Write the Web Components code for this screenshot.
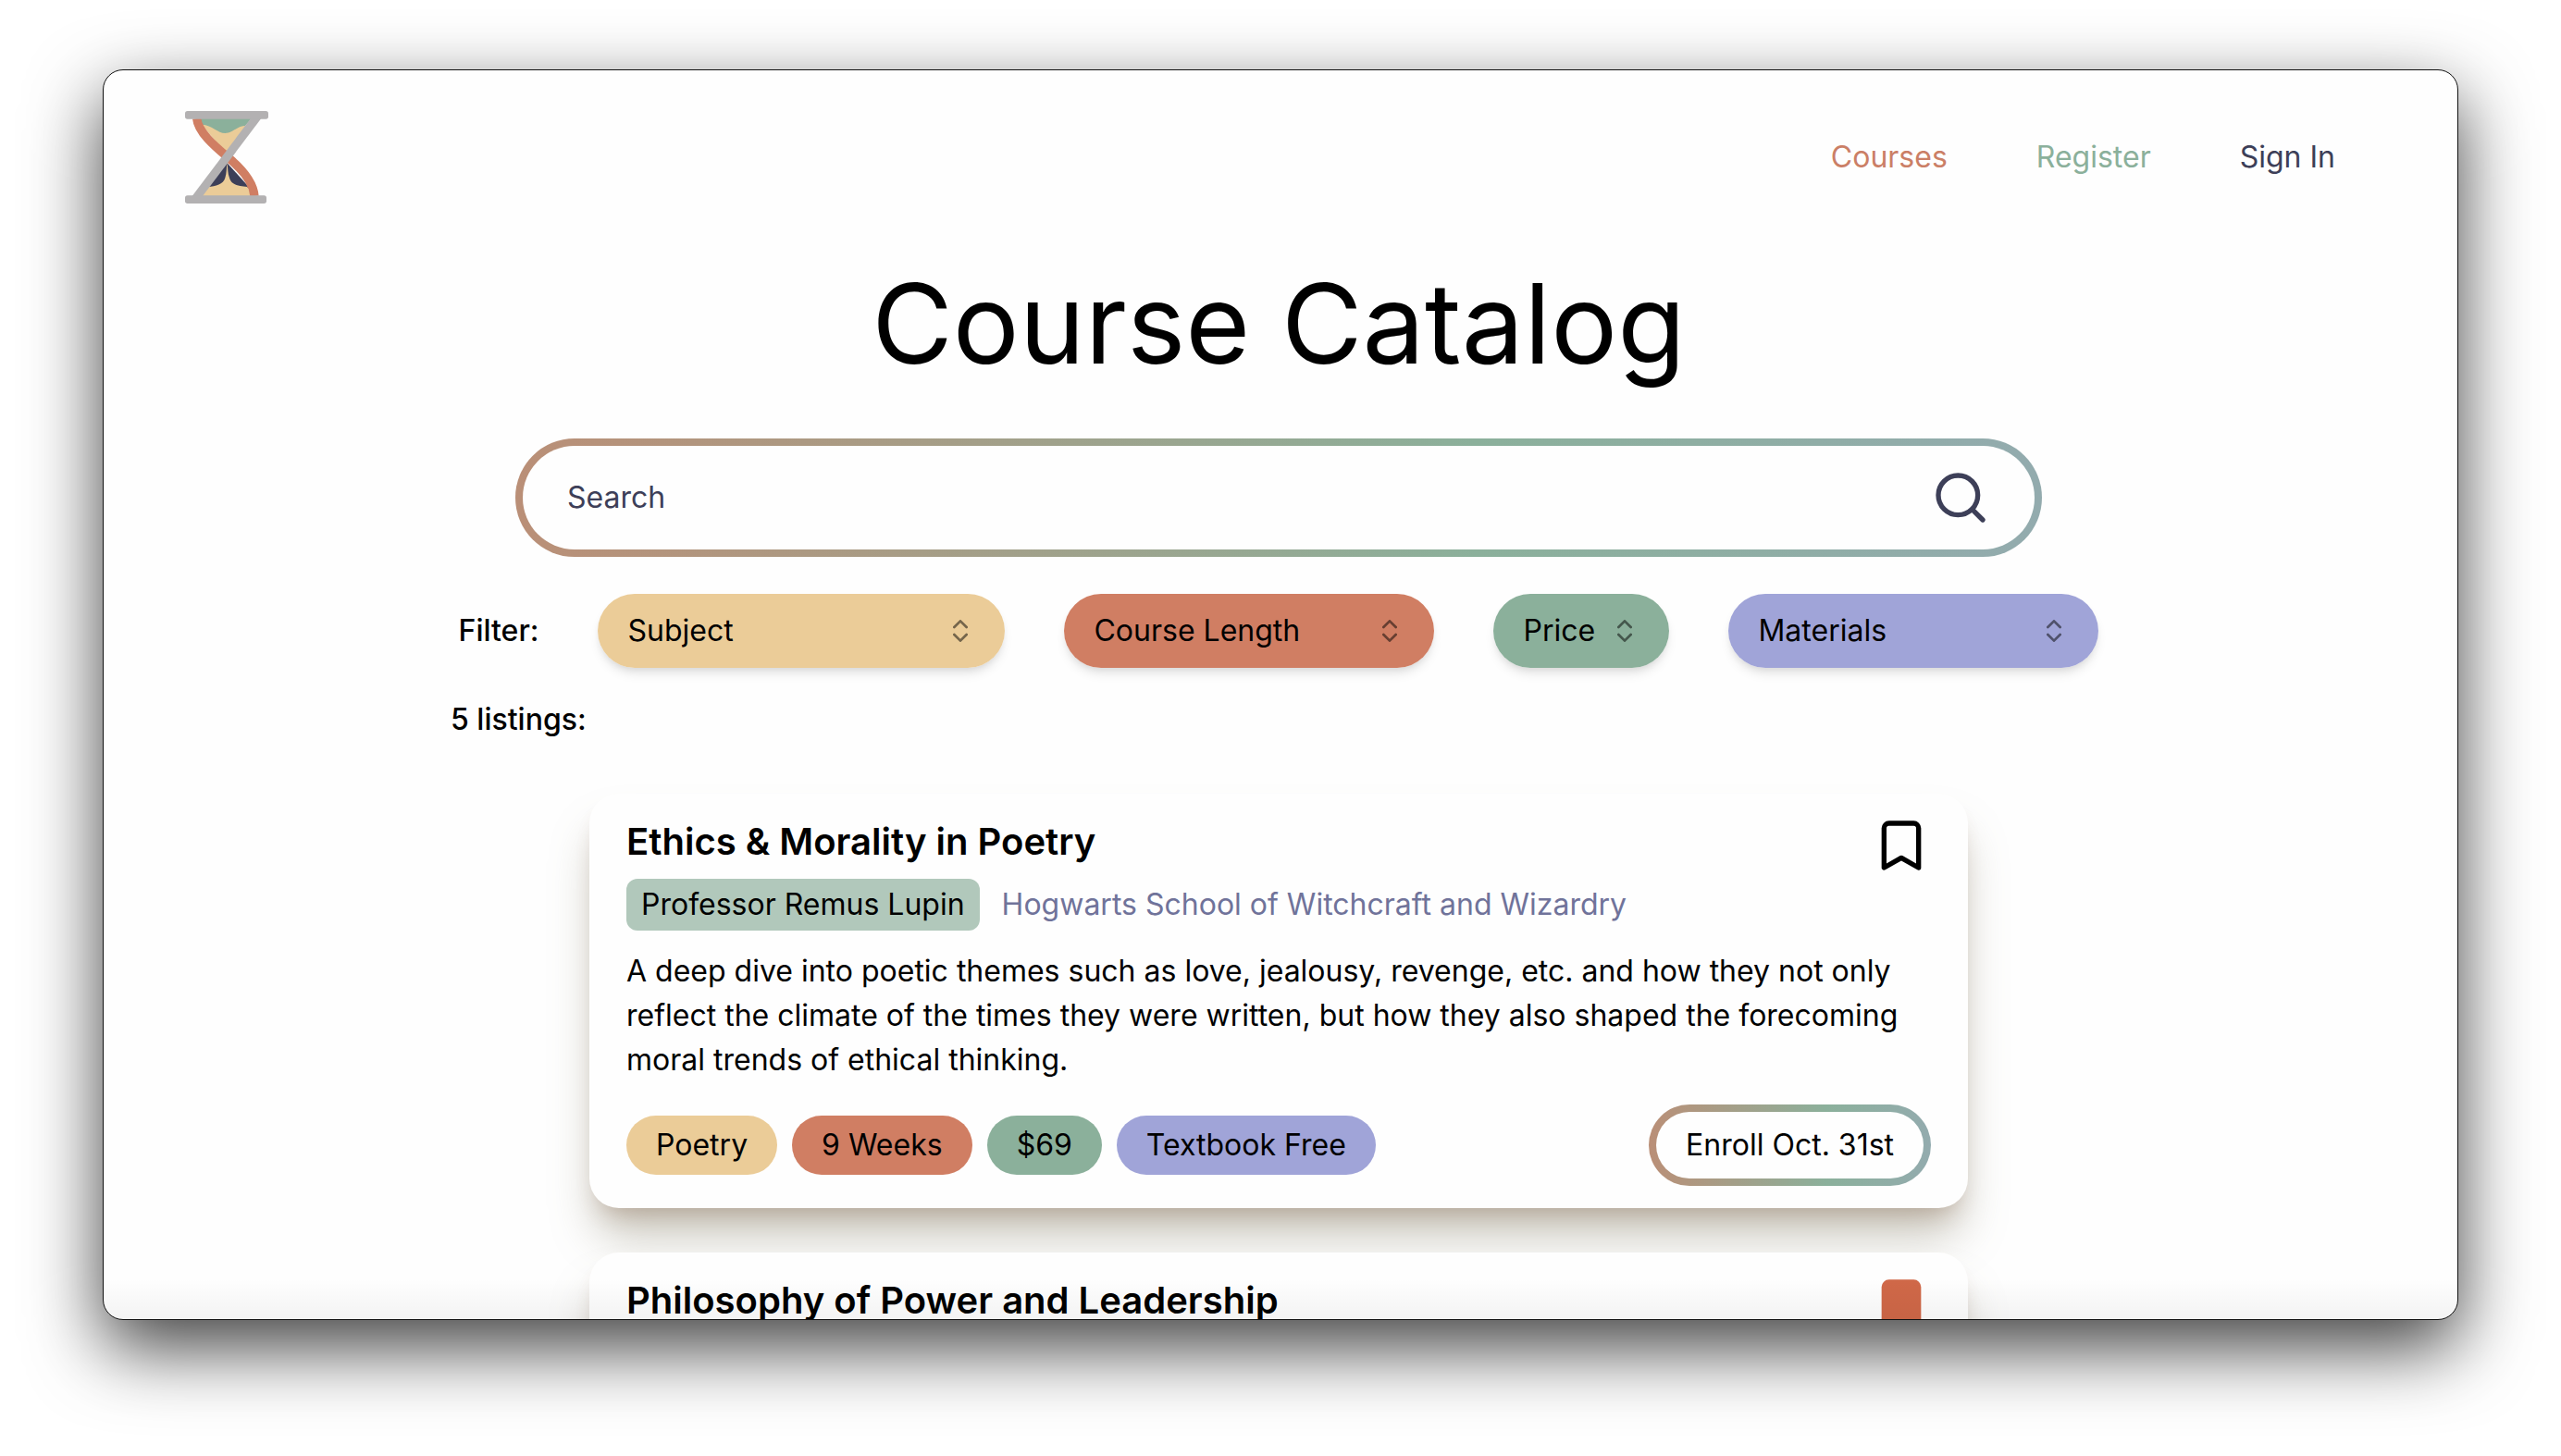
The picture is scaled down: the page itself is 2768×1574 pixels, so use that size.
<!DOCTYPE html>
<html lang="en">
<head>
<meta charset="utf-8">
<title>Course Catalog</title>
<style>
  :root {
    --sand: #ebcc98;
    --clay: #d07e63;
    --sage: #8bb09b;
    --iris: #a0a4d8;
    --navy: #3d3f58;
    --page: #fefefe;
    --ring: linear-gradient(to right, #ba8f77, #8bb09b 63%, #93abae);
  }
  body {
    margin: 0;
    min-height: 100vh;
    box-sizing: border-box;
    padding: 75px 111px 0;
    background: #fff;
    overflow: hidden;
    font: 400 32px/48px Inter, "Liberation Sans", sans-serif;
    color: #000;
  }
</style>
</head>
<body>
<app-window>
  <site-header></site-header>
  <catalog-title>Course Catalog</catalog-title>
  <search-bar></search-bar>
  <filter-row>
    <filter-select label="Subject" tone="sand" size="wide"></filter-select>
    <filter-select label="Course Length" tone="clay" size="medium"></filter-select>
    <filter-select label="Price" tone="sage"></filter-select>
    <filter-select label="Materials" tone="iris" size="medium"></filter-select>
  </filter-row>
  <listing-group count="5">
    <course-card>
      <span slot="title">Ethics &amp; Morality in Poetry</span>
      <course-byline slot="byline">
        <span slot="professor">Professor Remus Lupin</span>
        <span slot="school">Hogwarts School of Witchcraft and Wizardry</span>
      </course-byline>
      <span slot="summary">A deep dive into poetic themes such as love, jealousy, revenge, etc. and how they not only reflect the climate of the times they were written, but how they also shaped the forecoming moral trends of ethical thinking.</span>
      <course-tag slot="tags" tone="sand">Poetry</course-tag>
      <course-tag slot="tags" tone="clay">9 Weeks</course-tag>
      <course-tag slot="tags" tone="sage">$69</course-tag>
      <course-tag slot="tags" tone="iris">Textbook Free</course-tag>
      <enroll-button slot="action">Enroll Oct. 31st</enroll-button>
    </course-card>
    <course-card saved>
      <span slot="title">Philosophy of Power and Leadership</span>
    </course-card>
  </listing-group>
</app-window>

<script>
const define = (name, html, setup) => {
  const template = document.createElement('template');
  template.innerHTML = html;
  customElements.define(name, class extends HTMLElement {
    constructor() {
      super();
      this.attachShadow({ mode: 'open' }).append(template.content.cloneNode(true));
    }
    connectedCallback() { if (setup) setup(this, this.shadowRoot); }
  });
};

define('app-window', `
<style>
  :host {
    display: grid;
    box-sizing: border-box;
    height: calc(100vh - 222px);
    border: 1px solid #111;
    border-radius: 22px;
    background: var(--page);
    box-shadow: 0 30px 80px rgba(0, 0, 0, .75);
    overflow: hidden;
  }
  .page, .fade { grid-area: 1 / 1; min-height: 0; }
  .page { display: flex; flex-direction: column; align-items: center; padding-right: 4px; overflow: hidden; }
  .fade {
    align-self: end;
    height: 44px;
    z-index: 1;
    pointer-events: none;
    background: linear-gradient(transparent, rgba(0, 0, 0, .045));
  }
</style>
<div class="page"><slot></slot></div>
<div class="fade"></div>`);

define('site-header', `
<style>
  :host { display: block; align-self: stretch; flex: none; }
  header {
    display: flex; align-items: center; justify-content: space-between;
    padding: 44px 128px 70px 88px;
  }
  nav { display: flex; gap: 96px; }
  a { color: var(--navy); text-decoration: none; }
  a.courses { color: #cb7f66; }
  a.register { color: var(--sage); }
  svg { display: block; }
</style>
<header>
  <a href="#home" aria-label="Home">
    <svg width="90" height="100" viewBox="60 60 270 300" aria-hidden="true">
      <path d="M105 84H276L252 112L190 140L116 110Z" fill="#8bb09b"/>
      <path d="M114 104C150 106 165 132 190 132C215 132 230 107 258 107L195 200Z" fill="#ebcc98"/>
      <path d="M196 228L270 310L130 312Z" fill="#3d3f58"/>
      <path d="M196 232C194 246 195 262 190 277C184 299 160 304 134 307L112 336H276L262 306C225 302 210 298 204 277C198 262 199 246 197 232Z" fill="#ebcc98"/>
      <path d="M98 84C102 128 156 174 195 207C236 240 281 286 285 336" fill="none" stroke="#d07e63" stroke-width="28"/>
      <path d="M273 84H307L117 336H83Z" fill="#b3b1b2"/>
      <rect x="60" y="60" width="270" height="26" rx="8" fill="#b3b1b2"/>
      <rect x="60" y="334" width="264" height="26" rx="8" fill="#b3b1b2"/>
    </svg>
  </a>
  <nav>
    <a class="courses" href="#courses">Courses</a>
    <a class="register" href="#register">Register</a>
    <a href="#sign-in">Sign In</a>
  </nav>
</header>`);

define('catalog-title', `
<style>
  :host { display: block; flex: none; }
  h1 { margin: 0 0 64px; font-size: 120px; line-height: 120px; font-weight: 400; }
</style>
<h1><slot></slot></h1>`);

define('search-bar', `
<style>
  :host { display: block; flex: none; width: 65%; max-width: 1650px; }
  form {
    display: flex; align-items: center; box-sizing: border-box; height: 128px; padding: 0 48px;
    border: 8px solid transparent; border-radius: 64px;
    background: linear-gradient(var(--page), var(--page)) padding-box, var(--ring) border-box;
  }
  input {
    flex: 1; min-width: 0; padding: 0; border: 0; outline: 0; background: none;
    font: inherit; color: var(--navy);
  }
  input::placeholder { color: var(--navy); opacity: 1; }
  button { padding: 0; border: 0; background: none; color: var(--navy); }
  svg { display: block; }
</style>
<form role="search">
  <input type="text" placeholder="Search" aria-label="Search">
  <button type="button" aria-label="Search courses">
    <svg width="64" height="64" viewBox="0 0 24 24" fill="none" stroke="currentColor" stroke-width="2" stroke-linecap="round" stroke-linejoin="round"><circle cx="11" cy="11" r="8"/><path d="m21 21-4.3-4.3"/></svg>
  </button>
</form>`);

define('filter-row', `
<style>
  :host { display: flex; flex: none; align-items: center; gap: 64px; margin-top: 40px; }
  .label { font-weight: 500; }
</style>
<span class="label">Filter:</span>
<slot></slot>`);

define('filter-select', `
<style>
  :host { display: grid; align-items: center; height: 80px; border-radius: 40px;
    box-shadow: 0 8px 12px -2px rgba(0, 0, 0, .1), 0 4px 8px -4px rgba(0, 0, 0, .1); }
  :host([size="wide"]) { width: 440px; }
  :host([size="medium"]) { width: 400px; }
  select {
    grid-area: 1 / 1; width: 100%; height: 80px; margin: 0; padding: 0 80px 0 32px;
    appearance: none; border: 0; border-radius: 40px; background: var(--tone);
    font: inherit; color: #000;
  }
  svg { grid-area: 1 / 1; justify-self: end; margin-right: 32px; opacity: .5; pointer-events: none; }
</style>
<select><option></option></select>
<svg width="32" height="32" viewBox="0 0 24 24" fill="none" stroke="#000" stroke-width="2" stroke-linecap="round" stroke-linejoin="round" aria-hidden="true"><path d="m7 15 5 5 5-5M7 9l5-5 5 5"/></svg>`,
(host, root) => {
  const label = host.getAttribute('label');
  host.style.setProperty('--tone', `var(--${host.getAttribute('tone')})`);
  root.querySelector('select').setAttribute('aria-label', label);
  root.querySelector('option').textContent = label;
});

define('listing-group', `
<style>
  :host { display: flex; flex: none; flex-direction: column; align-items: center; gap: 48px;
    width: 100%; max-width: 1790px; margin-top: 32px; }
  p { align-self: stretch; margin: 0 0 8px; font-weight: 500; }
</style>
<p></p>
<slot></slot>`,
(host, root) => { root.querySelector('p').textContent = host.getAttribute('count') + ' listings:'; });

define('course-card', `
<style>
  :host { display: block; width: 100%; max-width: 1490px; }
  article {
    padding: 24px 40px; border-radius: 32px; background: var(--page);
    box-shadow: 0 36px 50px -8px rgba(115, 108, 80, .4), 0 16px 24px -12px rgba(140, 85, 60, .32);
  }
  .head { display: flex; align-items: flex-start; justify-content: space-between; height: 68px; }
  h2 { margin: 0; font-size: 40px; line-height: 56px; font-weight: 600; }
  button { padding: 0; border: 0; background: none; color: #000; }
  :host([saved]) button { color: #d06848; }
  :host([saved]) path { fill: currentColor; }
  svg { display: block; }
  p { margin: 20px 0 24px; }
  .foot { display: flex; align-items: center; justify-content: space-between; min-height: 88px; }
  .tags { display: flex; gap: 16px; }
</style>
<article>
  <div class="head">
    <h2><slot name="title"></slot></h2>
    <button type="button" aria-label="Save course">
      <svg width="64" height="64" viewBox="0 0 24 24" fill="none" stroke="currentColor" stroke-width="2" stroke-linecap="round" stroke-linejoin="round"><path d="m19 21-7-4-7 4V5a2 2 0 0 1 2-2h10a2 2 0 0 1 2 2v16z"/></svg>
    </button>
  </div>
  <slot name="byline"></slot>
  <p><slot name="summary"></slot></p>
  <div class="foot">
    <div class="tags"><slot name="tags"></slot></div>
    <slot name="action"></slot>
  </div>
</article>`);

define('course-byline', `
<style>
  :host { display: flex; align-items: center; gap: 24px; }
  .professor { padding: 4px 16px; border-radius: 12px; background: #b1c8bb; }
  .school { color: #70739a; }
</style>
<span class="professor"><slot name="professor"></slot></span>
<span class="school"><slot name="school"></slot></span>`);

define('course-tag', `
<style>
  :host { display: block; padding: 8px 32px; border-radius: 32px; background: var(--tone); }
</style>
<slot></slot>`,
host => host.style.setProperty('--tone', `var(--${host.getAttribute('tone')})`));

define('enroll-button', `
<style>
  :host { display: block; }
  button {
    display: block; height: 88px; padding: 0 32px;
    border: 8px solid transparent; border-radius: 44px;
    background: linear-gradient(var(--page), var(--page)) padding-box, var(--ring) border-box;
    font: inherit; color: #000;
  }
</style>
<button type="button"><slot></slot></button>`);
</script>
</body>
</html>
